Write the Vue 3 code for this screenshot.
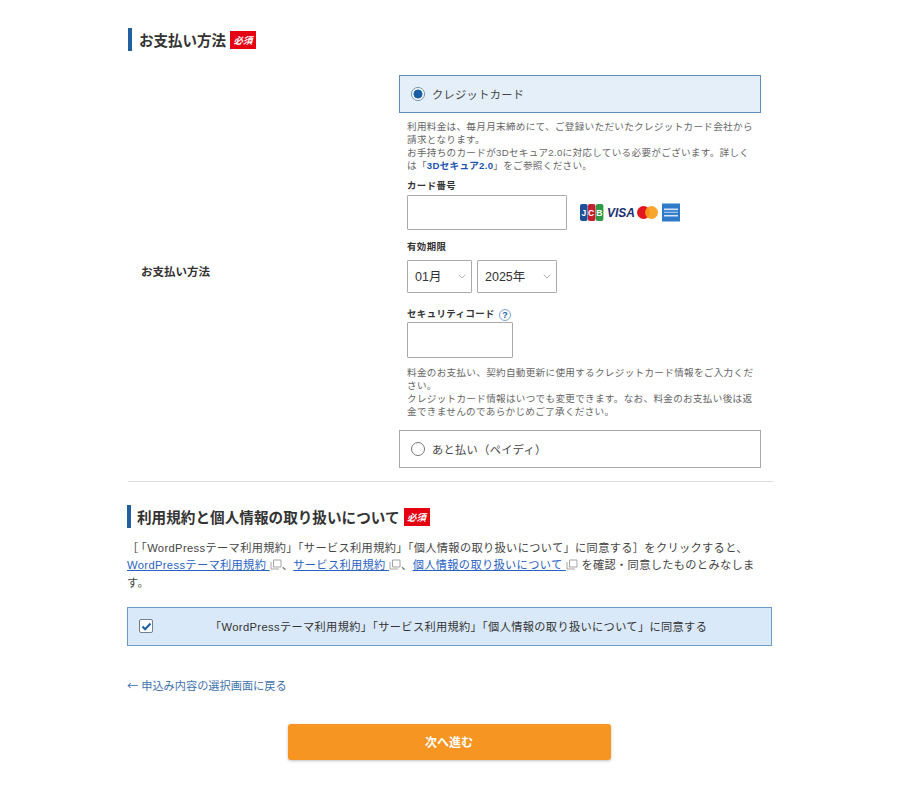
<script setup>
const months = ['01月', '02月', '03月']
const years = ['2025年', '2026年', '2027年']
</script>

<template>
  <main class="page">
    <h2 class="heading">
      <span>お支払い方法</span><em class="req">必須</em>
    </h2>

    <section class="pay-row">
      <div class="pay-label">お支払い方法</div>
      <div class="pay-body">
        <label class="option option-on">
          <span class="radio radio-on"></span>
          <span>クレジットカード</span>
        </label>

        <div class="card-form">
          <p class="note">
            利用料金は、毎月月末締めにて、ご登録いただいたクレジットカード会社から請求となります。<br>
            お手持ちのカードが3Dセキュア2.0に対応している必要がございます。詳しくは「<a class="note-link">3Dセキュア2.0</a>」をご参照ください。
          </p>

          <div class="field-title first">カード番号</div>
          <div class="card-line">
            <input class="text-input card-input" type="text">
            <svg class="brands" width="102" height="20" viewBox="0 0 102 20">
              <rect x="0" y="1" width="7.6" height="17" rx="2" fill="#1c4f9c" />
              <rect x="7.9" y="1" width="7.6" height="17" rx="2" fill="#c4202f" />
              <rect x="15.8" y="1" width="7.6" height="17" rx="2" fill="#2f9a45" />
              <text x="1.6" y="13" class="jcb">J</text>
              <text x="8" y="13" class="jcb">C</text>
              <text x="16.2" y="13" class="jcb">B</text>
              <text x="27" y="14" class="visa">VISA</text>
              <circle cx="63.5" cy="9.5" r="6.5" fill="#e2161f" />
              <circle cx="71.5" cy="9.5" r="6.5" fill="#f79e1b" fill-opacity=".92" />
              <rect x="82" y="0.5" width="18" height="18" fill="#2f79c9" />
              <rect x="84" y="5.5" width="14" height="1.6" fill="#d6e6f7" />
              <rect x="84" y="8.7" width="14" height="1.2" fill="#a9cdf0" />
              <rect x="84" y="11.9" width="14" height="1.6" fill="#d6e6f7" />
            </svg>
          </div>

          <div class="field-title expiry">有効期限</div>
          <div class="select-line">
            <div class="select-wrap month">
              <select class="select"><option v-for="m in months" :key="m">{{ m }}</option></select>
              <svg class="chevron" width="8" height="5" viewBox="0 0 8 5"><path d="M.7.7 4 4l3.3-3.3" fill="none" stroke="#a8a8a8" stroke-width=".9" /></svg>
            </div>
            <div class="select-wrap year">
              <select class="select"><option v-for="y in years" :key="y">{{ y }}</option></select>
              <svg class="chevron" width="8" height="5" viewBox="0 0 8 5"><path d="M.7.7 4 4l3.3-3.3" fill="none" stroke="#a8a8a8" stroke-width=".9" /></svg>
            </div>
          </div>

          <div class="field-title security">
            <span>セキュリティコード</span>
            <span class="help">?</span>
          </div>
          <input class="text-input code-input" type="text">

          <p class="note note-bottom">
            料金のお支払い、契約自動更新に使用するクレジットカード情報をご入力ください。<br>
            クレジットカード情報はいつでも変更できます。なお、料金のお支払い後は返金できませんのであらかじめご了承ください。
          </p>
        </div>

        <label class="option">
          <span class="radio"></span>
          <span>あと払い（ペイディ）</span>
        </label>
      </div>
    </section>

    <hr class="rule">

    <h2 class="heading heading-terms">
      <span>利用規約と個人情報の取り扱いについて</span><em class="req">必須</em>
    </h2>

    <p class="terms">
      <span class="open">［</span>「WordPressテーマ利用規約」「サービス利用規約」「個人情報の取り扱いについて」に同意する］をクリックすると、<br>
      <a class="link">WordPressテーマ利用規約 </a><svg class="ext" width="12" height="11" viewBox="0 0 12 11"><path d="M3.5 1h7.5v7H3.5zM1 3v7h8" fill="none" stroke="#9a9a9a" stroke-width=".9" /></svg>、<a class="link">サービス利用規約 </a><svg class="ext" width="12" height="11" viewBox="0 0 12 11"><path d="M3.5 1h7.5v7H3.5zM1 3v7h8" fill="none" stroke="#9a9a9a" stroke-width=".9" /></svg>、<a class="link">個人情報の取り扱いについて </a><svg class="ext" width="12" height="11" viewBox="0 0 12 11"><path d="M3.5 1h7.5v7H3.5zM1 3v7h8" fill="none" stroke="#9a9a9a" stroke-width=".9" /></svg> を確認・同意したものとみなします。
    </p>

    <label class="agree">
      <span class="check">
        <svg width="11" height="9" viewBox="0 0 11 9"><path d="M1.5 4.5 4.2 7.2 9.5 1.5" fill="none" stroke="#1a5ea8" stroke-width="2" /></svg>
      </span>
      <span class="agree-text">「WordPressテーマ利用規約」「サービス利用規約」「個人情報の取り扱いについて」に同意する</span>
    </label>

    <a class="back"><span class="arrow">←</span>申込み内容の選択画面に戻る</a>

    <div class="submit-line">
      <button class="submit" type="button">次へ進む</button>
    </div>
  </main>
</template>

<style>
html, body { margin: 0; background: #fff; }
</style>

<style scoped>
.page {
  box-sizing: border-box;
  width: 900px;
  height: 785px;
  overflow: hidden;
  padding: 28px 127px 0;
  font-family: "Liberation Sans", "Noto Sans CJK JP", sans-serif;
  color: #3c3c3c;
}
.heading {
  display: flex;
  align-items: center;
  height: 23px;
  margin: 0 0 0 1px;
  padding-left: 7px;
  border-left: 4px solid #22609f;
  font-size: 14.5px;
  font-weight: 700;
  color: #333;
}
.req {
  display: flex;
  align-items: center;
  justify-content: center;
  width: 26px;
  height: 18px;
  margin: 1px 0 0 4px;
  background: #e50012;
  color: #fff;
  font-size: 9.5px;
  font-weight: 700;
  font-style: italic;
}
.pay-row {
  display: flex;
  align-items: center;
  margin: 24px 0 0 14px;
}
.pay-label {
  width: 258px;
  padding-bottom: 2px;
  font-size: 11.5px;
  font-weight: 700;
  color: #333;
}
.pay-body { width: 362px; }
.option {
  box-sizing: border-box;
  display: flex;
  align-items: center;
  gap: 7px;
  height: 38px;
  padding: 0 0 1px 11px;
  border: 1px solid #aaa;
  font-size: 11.2px;
  letter-spacing: .35px;
  color: #444;
}
.option-on {
  background: #e4effa;
  border-color: #5e8db8;
}
.radio {
  box-sizing: border-box;
  width: 14px;
  height: 14px;
  border: 1px solid #777;
  border-radius: 50%;
  background: #fff;
}
.radio-on {
  border-color: #6a8fb5;
  background: radial-gradient(circle, #1a5ea8 0 4.2px, #fff 4.8px);
}
.card-form { padding: 7px 0 12px 8px; }
.note {
  width: 349px;
  margin: 0;
  font-size: 9.6px;
  line-height: 13px;
  letter-spacing: .3px;
  color: #666;
}
.note-link { color: #1c55b0; font-weight: 700; }
.note-bottom { margin-top: 8px; }
.field-title {
  font-size: 9.4px;
  font-weight: 700;
  line-height: 14px;
  letter-spacing: .45px;
  color: #333;
}
.first { margin-top: 7px; }
.expiry { margin-top: 10px; }
.security {
  display: flex;
  align-items: center;
  gap: 4px;
  margin-top: 14px;
}
.help {
  box-sizing: border-box;
  display: flex;
  align-items: center;
  justify-content: center;
  width: 12px;
  height: 12px;
  margin-top: 2px;
  border: 1px solid #7aa6d0;
  border-radius: 50%;
  font-size: 9px;
  letter-spacing: 0;
  color: #22609f;
}
.card-line {
  display: flex;
  align-items: center;
  margin-top: 2px;
}
.text-input {
  box-sizing: border-box;
  display: block;
  border: 1px solid #aaa;
  border-radius: 1px;
  background: #fff;
}
.card-input { width: 160px; height: 35px; }
.brands { margin-left: 13px; }
.code-input { width: 106px; height: 36px; margin-top: 1px; }
.jcb { font-size: 8.5px; font-weight: 700; fill: #fff; }
.visa { font-size: 12px; font-weight: 700; font-style: italic; fill: #1a2f73; }
.select-line {
  display: flex;
  gap: 5px;
  margin-top: 6px;
}
.select-wrap { position: relative; height: 33px; }
.month { width: 65px; }
.year { width: 80px; }
.select {
  box-sizing: border-box;
  width: 100%;
  height: 100%;
  padding: 0 0 0 7px;
  border: 1px solid #aaa;
  border-radius: 1px;
  background: #fff;
  appearance: none;
  font: inherit;
  font-size: 12.5px;
  color: #333;
}
.chevron {
  position: absolute;
  right: 6px;
  top: 14px;
  pointer-events: none;
}
.rule {
  width: 645px;
  height: 1px;
  margin: 13px 0 0 1px;
  border: 0;
  background: #ddd;
}
.heading-terms {
  margin: 23px 0 0;
  padding-left: 6px;
  font-size: 14.6px;
  letter-spacing: .02px;
}
.terms {
  margin: 11.5px 0 0;
  font-size: 11.2px;
  line-height: 17.5px;
  letter-spacing: .36px;
  color: #444;
}
.open { letter-spacing: 3px; }
.link { color: #2a62c4; text-decoration: underline; }
.ext { vertical-align: -1px; }
.agree {
  box-sizing: border-box;
  display: flex;
  align-items: center;
  height: 39px;
  margin-top: 14.5px;
  padding-left: 11px;
  width: 645px;
  border: 1px solid #6e9bc4;
  background: #d9e9f9;
  font-size: 11.2px;
  letter-spacing: .36px;
  color: #333;
}
.check {
  box-sizing: border-box;
  display: flex;
  align-items: center;
  justify-content: center;
  width: 14px;
  height: 14px;
  border: 1px solid #6f7f90;
  border-radius: 2px;
  background: #fff;
}
.agree-text { margin-left: 57px; }
.back {
  display: block;
  margin-top: 31px;
  font-size: 11.2px;
  line-height: 16px;
  color: #3f73ad;
}
.arrow {
  margin-right: 3px;
  font-family: "Noto Sans CJK JP", sans-serif;
}
.submit-line {
  display: flex;
  justify-content: center;
  margin: 30px 0 0 -2px;
}
.submit {
  width: 323px;
  height: 36px;
  border: 0;
  border-radius: 3px;
  background: #f79522;
  box-shadow: 0 1px 3px rgba(0, 0, 0, .25);
  color: #fff;
  font: inherit;
  font-size: 12px;
  font-weight: 700;
}
</style>
